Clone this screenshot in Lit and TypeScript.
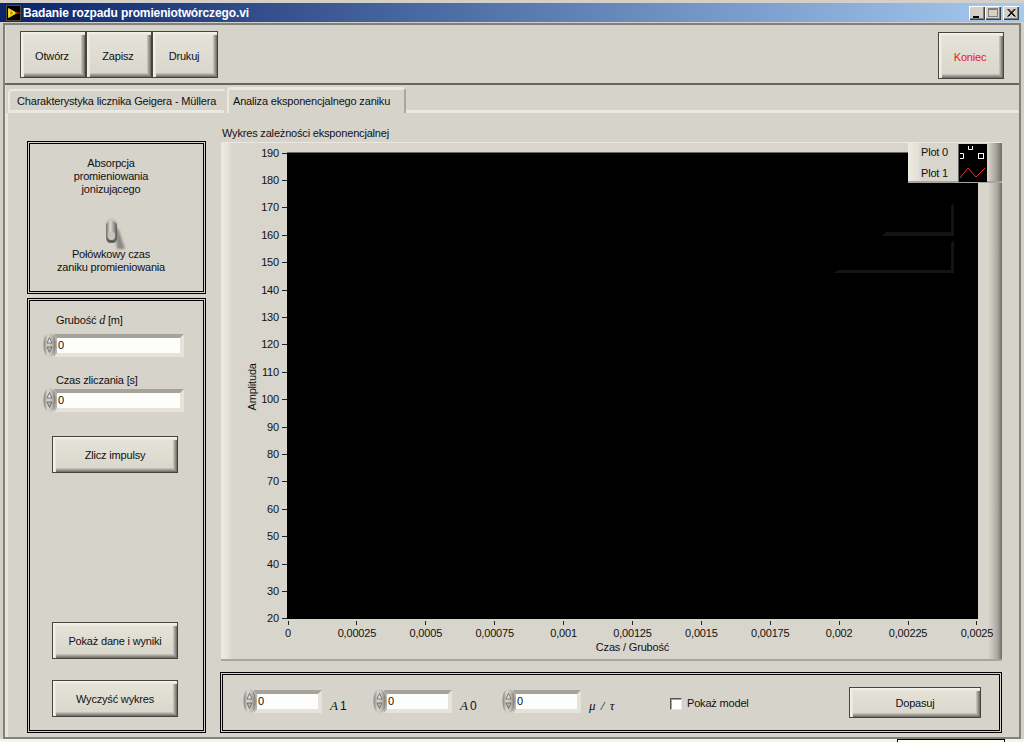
import { LitElement, html, css, svg } from "lit";
import { customElement } from "lit/decorators.js";

const yTicks = [190,180,170,160,150,140,130,120,110,100,90,80,70,60,50,40,30,20];
const xTicks = ["0","0,00025","0,0005","0,00075","0,001","0,00125","0,0015","0,00175","0,002","0,00225","0,0025"];

const spinner = () => html`<svg class="spin" width="13" height="24" viewBox="0 0 13 24">
  <defs><linearGradient id="sg" x1="0" x2="1" y1="0" y2="0">
    <stop offset="0" stop-color="#85837d"/><stop offset=".35" stop-color="#d8d6d0"/><stop offset=".7" stop-color="#bdbbb5"/><stop offset="1" stop-color="#76746f"/>
  </linearGradient></defs>
  <path d="M6.5 0C10 0 12.5 4 12.5 12S10 24 6.5 24 .5 20 .5 12 3 0 6.5 0Z" fill="url(#sg)"/>
  <path d="M6.5 4.5L4 10H9Z" fill="#e8e6e0" stroke="#5f5d58" stroke-width=".8"/>
  <path d="M6.5 19.5L4 14H9Z" fill="#b8b6b0" stroke="#5f5d58" stroke-width=".8"/>
</svg>`;

const numeric = (cls: string) => html`<div class="numeric">${spinner()}<div class="field ${cls}">0</div></div>`;

@customElement("app-root")
export class AppRoot extends LitElement {
  static styles = css`
    :host { display: block; width: 1024px; height: 742px; overflow: hidden; background: #f4f3ef; position: relative;
      font: 11px/13px "Liberation Sans", Arial, sans-serif; letter-spacing: -.18px; color: #111; }
    .window { height: 739px; box-sizing: border-box; background: #d4d0c8; padding: 1px 3px 0 3px; border-top: 1px solid #d4d0c8; display: flex; flex-direction: column; }
    .title { height: 19px; margin: 1px -3px 0 -3px; padding: 0 5px 0 6px; display: flex; align-items: center; flex: none;
      background: linear-gradient(90deg, #0a246a 0%, #a6caf0 100%); color: #fff; font: bold 12px/16px "Liberation Sans", sans-serif; letter-spacing: -.13px; }
    .title span { margin-left: 2px; flex: 1; }
    .wbtn { width: 16px; height: 14px; box-sizing: border-box; background: #d4d0c8; box-shadow: inset 1px 1px 0 #fff, inset -1px -1px 0 #404040, inset -2px -2px 0 #808080; display: block; }
    .wbtn.close { margin-left: 2px; }
    .body { flex: 1; margin-top: 1px; border: 2px solid #808080; box-shadow: inset 1px 0 0 #e6e3dc; background: #d6d3cb; display: flex; flex-direction: column; min-height: 0; }
    .toolbar { height: 58px; box-sizing: border-box; padding: 6px 15px 0 15px; display: flex; flex: none; align-items: flex-start; }
    .toolbar .grow { flex: 1; }
    .btn { box-sizing: border-box; display: flex; align-items: center; justify-content: center; border: 1px solid #45443f; color: #111; padding-top: 1px;
      background: linear-gradient(180deg, #e6e3d9, #d8d5cb);
      box-shadow: inset 1px 1px 0 #f3f1ea, inset 2px 2px 0 #efece4, inset 3px 3px 0 #e9e6dd, inset -1px -1px 0 #75736c, inset -2px -2px 0 #8f8d86, inset -3px -3px 0 #a9a69f, inset -4px -4px 0 #c2bfb7; }
    .tb { width: 66px; height: 47px; padding: 3px 2px 0 0; }
    .koniec { color: #e8181c; margin-top: 1px; }
    .wide { width: 126px; height: 37px; margin-left: 22px; }
    .divider { height: 2px; background: #666560; flex: none; }
    .tabs { height: 28px; display: flex; align-items: flex-end; flex: none; padding-left: 3px; }
    .tab { box-sizing: border-box; border-radius: 4px 4px 0 0; display: flex; align-items: center; background: #d6d3cb; border-top: 2px solid #ebe8e0; border-left: 2px solid #ebe8e0; border-right: 2px solid #a9a69f; padding-left: 7px; }
    .tab.a { width: 218px; height: 24px; padding-bottom: 2px; border-right-color: #d6d3cb; box-shadow: inset 0 -3px 0 #ebe8e0; }
    .tab.b { width: 179px; height: 26px; margin-left: 1px; padding-left: 4px; border-top-width: 3px; }
    .tabline { flex: 1; height: 3px; background: #ebe8e0; }
    .content { flex: 1; display: flex; padding: 28px 0 0 22px; box-shadow: inset 3px 0 0 #e8e5dc; min-height: 0; }
    .left { width: 179px; flex: none; display: flex; flex-direction: column; gap: 4px; }
    .panel { border: 3px double #000; box-sizing: border-box; }
    .p1 { height: 153px; padding: 13px 11px 0 0; text-align: center; }
    .toggle { display: block; margin: 22px auto 4px 73px; overflow: visible; }
    .p2 { height: 435px; display: flex; flex-direction: column; }
    .lbl { margin-left: 26px; }
    .lbl i { font: italic 12px/13px "Liberation Serif", serif; }
    .lbl.l1 { margin-top: 13px; }
    .lbl.l2 { margin-top: 17px; }
    .numeric { display: flex; align-items: flex-start; }
    .spin { flex: none; display: block; position: relative; z-index: 1; }
    .field { box-sizing: border-box; height: 23px; margin: 1px 0 0 -2px; padding-left: 1px; background: #fdfdfb; line-height: 15px; background-clip: padding-box;
      border: solid; border-width: 4px 4px 4px 3px; border-color: #a5a39c #e6e3da #e6e3da #b5b2ab; }
    .f-l { width: 130px; }
    .f-s { width: 68px; }
    .num1 { margin: 6px 0 0 13px; }
    .num2 { margin: 1px 0 0 13px; }
    .z { margin-top: 24px; }
    .p { margin-top: 149px; }
    .w { margin-top: 21px; }
    .right { width: 782px; margin: -14px 0 0 14px; flex: none; }
    .caption { height: 15px; padding-left: 2px; }
    .graph { position: relative; margin-left: 1px; height: 519px; box-sizing: border-box; display: grid;
      grid-template-columns: 66px 691px 1fr; grid-template-rows: 9px 467px 1fr;
      background:
        linear-gradient(90deg, #eeebe2, #e5e2d9 60%, #d8d5cd) left/11px 100% no-repeat,
        linear-gradient(90deg, #d8d5cd, #c4c1b9 35%, #a7a49d 70%, #6d6b66) right/14px 100% no-repeat,
        #d8d5cd;
      border-top: 1px solid #ebe8e0; border-bottom: 2px solid #a8a59e; }
    .ycell { grid-column: 1; grid-row: 2; display: flex; }
    .amp { width: 31px; flex: none; display: flex; align-items: center; justify-content: center; padding-left: 31px; box-sizing: border-box; }
    .amp span { display: block; transform: rotate(-90deg); white-space: nowrap; width: 0; text-indent: -25px; }
    .yticks { flex: 1; display: flex; flex-direction: column; justify-content: space-between; margin-top: 1px; }
    .yt { height: 0; display: flex; align-items: center; justify-content: flex-end; gap: 3px; }
    .yt i { display: block; width: 5px; height: 1px; background: #222; flex: none; }
    .plot { grid-column: 2; grid-row: 2; background: #000; border-top: 1px solid #6b6a66; position: relative; box-sizing: border-box; }
    .ghost { position: absolute; left: 0; top: -1px; overflow: visible; }
    .xcell { grid-column: 1 / 4; grid-row: 3; padding-left: 67px; }
    .xticks { width: 689px; display: flex; justify-content: space-between; margin-top: 2px; }
    .xt { width: 0; height: 18px; display: flex; flex-direction: column; align-items: center; flex: none; white-space: nowrap; }
    .xt i { display: block; width: 1px; height: 4px; background: #222; flex: none; margin-bottom: 2px; }
    .xtitle { width: 691px; margin-left: -1px; text-align: center; margin-top: 2px; }
    .legend { position: absolute; right: 0; top: -1px; width: 94px; height: 41px; box-sizing: border-box; display: flex; align-items: flex-start;
      background: linear-gradient(90deg, #eeebe2, #e3e0d7 10px, #d8d5cd 13px, #d8d5cd 80px, #c4c1b9 83px, #a7a49d 88px, #6d6b66);
      border-bottom: 2px solid #a8a59e; border-top: 1px solid #ebe8e0; }
    .names { width: 50px; padding: 2px 0 0 13px; box-sizing: border-box; }
    .names div { height: 21px; line-height: 15px; }
    .swatch { display: block; margin-top: 1px; flex: none; background: #000; border-left: 1px solid #6b6a66; }
    .p3 { margin-top: 11px; height: 61px; display: flex; align-items: flex-start; padding: 0 0 0 20px; }
    .grp { display: flex; align-items: flex-start; padding-top: 14px; flex: none; }
    .g1 { width: 130px; } .g2 { width: 129px; } .g3 { width: 168px; } .g4 { width: 179px; }
    .mathl { font: italic 13px/14px "Liberation Serif", serif; margin: 10px 0 0 8px; letter-spacing: 1px; white-space: nowrap; }
    .mathl b { font: 12px/13px "Liberation Sans", sans-serif; letter-spacing: 0; margin-left: 1px; }
    .check { display: flex; align-items: center; gap: 5px; margin-top: 8px; }
    .box { width: 12px; height: 12px; box-sizing: border-box; background: #fff; border: 1px solid; border-color: #555 #e8e5dc #e8e5dc #555; box-shadow: inset 1px 1px 0 #a5a39c; }
    .dop { width: 132px; height: 31px; margin-top: 12px; flex: none; }
    .tip { position: absolute; left: 897px; top: 739px; width: 108px; height: 10px; box-sizing: border-box; background: #ffffe1; border: 1px solid #000; }
  `;

  render() {
    return html`
      <div class="window">
        <div class="title">
          <svg width="15" height="16" viewBox="0 0 15 16">
            <rect width="15" height="16" fill="#000"/>
            <rect x=".5" y=".5" width="14" height="15" fill="none" stroke="#9a8f70" stroke-dasharray="1 1"/>
            <path d="M2.5 3.5V12.5L10.5 8Z" fill="#ffe838" stroke="#e8d000"/>
            <path d="M4 8H6M9 8H15" stroke="#e81010"/>
            <path d="M4 5.5L7 8L4 10.5" stroke="#a8a020" fill="none"/>
          </svg>
          <span>Badanie rozpadu promieniotwórczego.vi</span>
          <svg class="wbtn" viewBox="0 0 16 14"><rect x="4" y="10" width="6" height="2" fill="#000"/></svg>
          <svg class="wbtn" viewBox="0 0 16 14"><rect x="3.5" y="2.5" width="9" height="8" fill="none" stroke="#808080"/><rect x="3" y="2" width="10" height="2" fill="#808080"/></svg>
          <svg class="wbtn close" viewBox="0 0 16 14"><path d="M4.5 3L11.5 10.5M5.5 3L12.5 10.5M11.5 3L4.5 10.5M12.5 3L5.5 10.5" stroke="#000" stroke-width="1"/></svg>
        </div>
        <div class="body">
          <div class="toolbar">
            <div class="btn tb">Otwórz</div>
            <div class="btn tb">Zapisz</div>
            <div class="btn tb">Drukuj</div>
            <div class="grow"></div>
            <div class="btn tb koniec">Koniec</div>
          </div>
          <div class="divider"></div>
          <div class="tabs">
            <div class="tab a">Charakterystyka licznika Geigera - Müllera</div>
            <div class="tab b">Analiza eksponencjalnego zaniku</div>
            <div class="tabline"></div>
          </div>
          <div class="content">
            <div class="left">
              <div class="panel p1">
                Absorpcja<br>promieniowania<br>jonizującego
                <svg class="toggle" width="15" height="26" viewBox="0 0 15 26">
                  <defs>
                    <linearGradient id="tg" x1="0" x2="1" y1="0" y2="0">
                      <stop offset="0" stop-color="#6f6e68"/><stop offset=".38" stop-color="#dddbd5"/><stop offset=".7" stop-color="#a09e98"/><stop offset="1" stop-color="#55544f"/>
                    </linearGradient>
                    <filter id="bl"><feGaussianBlur stdDeviation=".8"/></filter>
                  </defs>
                  <path d="M12 12L15 10L22 31L14 31Z" fill="#8b8982" filter="url(#bl)"/>
                  <ellipse cx="8.5" cy="6" rx="6.5" ry="6" fill="#c8c6bf"/>
                  <rect x="3" y="3" width="11" height="22" rx="5" fill="url(#tg)"/>
                  <rect x="4" y="18" width="9" height="7" rx="3.5" fill="#5f5e59"/>
                  <rect x="5" y="14" width="7" height="8" rx="3" fill="#c6c4be"/>
                </svg>
                Połówkowy czas<br>zaniku promieniowania
              </div>
              <div class="panel p2">
                <div class="lbl l1">Grubość <i>d</i> [m]</div>
                <div class="num1">${numeric("f-l")}</div>
                <div class="lbl l2">Czas zliczania [s]</div>
                <div class="num2">${numeric("f-l")}</div>
                <div class="btn wide z">Zlicz impulsy</div>
                <div class="btn wide p">Pokaż dane i wyniki</div>
                <div class="btn wide w">Wyczyść wykres</div>
              </div>
            </div>
            <div class="right">
              <div class="caption">Wykres zależności eksponencjalnej</div>
              <div class="graph">
                <div class="ycell">
                  <div class="amp"><span>Amplituda</span></div>
                  <div class="yticks">
                    ${yTicks.map(t => html`<div class="yt">${t}<i></i></div>`)}
                  </div>
                </div>
                <div class="plot">
                  <svg class="ghost" width="691" height="467" viewBox="287 152 691 467">
                    ${svg`<path d="M951 206L954 203V236H882L886 232H951Z" fill="#141414"/>
                    <path d="M951 243L954 240V273H834L838 270H951Z" fill="#141414"/>`}
                  </svg>
                </div>
                <div class="xcell">
                  <div class="xticks">
                    ${xTicks.map(t => html`<div class="xt"><i></i>${t}</div>`)}
                  </div>
                  <div class="xtitle">Czas / Grubość</div>
                </div>
                <div class="legend">
                  <div class="names"><div>Plot 0</div><div>Plot 1</div></div>
                  <svg class="swatch" width="28" height="38" viewBox="0 0 28 38">
                    <path d="M9.5 2V5.5H13.5V2" fill="none" stroke="#fff"/>
                    <path d="M1 9.5H4.5V14.5H1" fill="none" stroke="#fff"/>
                    <rect x="19.5" y="9.5" width="5" height="5" fill="none" stroke="#fff"/>
                    <path d="M1 34L9 24L17 33L26 24" fill="none" stroke="#e8304a"/>
                  </svg>
                </div>
              </div>
              <div class="panel p3">
                <div class="grp g1">${numeric("f-s")}<div class="mathl">A<b>1</b></div></div>
                <div class="grp g2">${numeric("f-s")}<div class="mathl">A<b>0</b></div></div>
                <div class="grp g3">${numeric("f-s")}<div class="mathl">μ / τ</div></div>
                <div class="grp g4"><div class="check"><div class="box"></div>Pokaż model</div></div>
                <div class="btn dop">Dopasuj</div>
              </div>
            </div>
          </div>
        </div>
      </div>
      <div class="tip"></div>
    `;
  }
}
